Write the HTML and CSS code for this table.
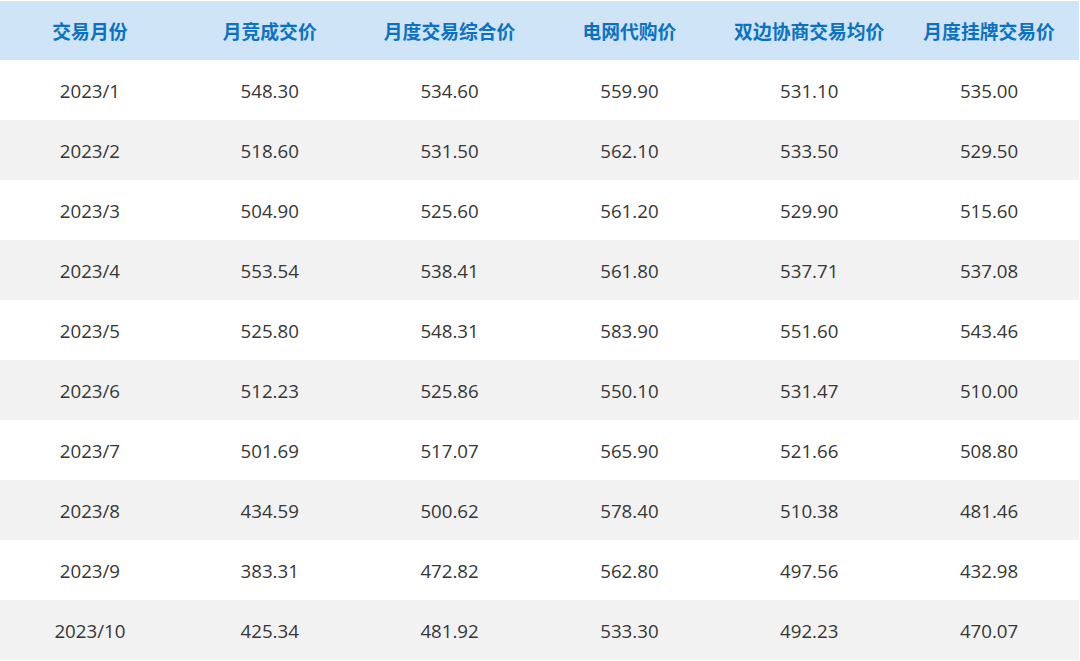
FILE: index.html
```html
<!DOCTYPE html>
<html lang="zh-CN">
<head>
<meta charset="utf-8">
<link rel="stylesheet" href="styles.css">
</head>
<body>
<div class="table">
  <div class="row head">
    <div class="cell">交易月份</div><div class="cell">月竞成交价</div><div class="cell">月度交易综合价</div><div class="cell">电网代购价</div><div class="cell">双边协商交易均价</div><div class="cell">月度挂牌交易价</div>
  </div>
  <div class="row"><div class="cell">2023/1</div><div class="cell">548.30</div><div class="cell">534.60</div><div class="cell">559.90</div><div class="cell">531.10</div><div class="cell">535.00</div></div>
  <div class="row alt"><div class="cell">2023/2</div><div class="cell">518.60</div><div class="cell">531.50</div><div class="cell">562.10</div><div class="cell">533.50</div><div class="cell">529.50</div></div>
  <div class="row"><div class="cell">2023/3</div><div class="cell">504.90</div><div class="cell">525.60</div><div class="cell">561.20</div><div class="cell">529.90</div><div class="cell">515.60</div></div>
  <div class="row alt"><div class="cell">2023/4</div><div class="cell">553.54</div><div class="cell">538.41</div><div class="cell">561.80</div><div class="cell">537.71</div><div class="cell">537.08</div></div>
  <div class="row"><div class="cell">2023/5</div><div class="cell">525.80</div><div class="cell">548.31</div><div class="cell">583.90</div><div class="cell">551.60</div><div class="cell">543.46</div></div>
  <div class="row alt"><div class="cell">2023/6</div><div class="cell">512.23</div><div class="cell">525.86</div><div class="cell">550.10</div><div class="cell">531.47</div><div class="cell">510.00</div></div>
  <div class="row"><div class="cell">2023/7</div><div class="cell">501.69</div><div class="cell">517.07</div><div class="cell">565.90</div><div class="cell">521.66</div><div class="cell">508.80</div></div>
  <div class="row alt"><div class="cell">2023/8</div><div class="cell">434.59</div><div class="cell">500.62</div><div class="cell">578.40</div><div class="cell">510.38</div><div class="cell">481.46</div></div>
  <div class="row"><div class="cell">2023/9</div><div class="cell">383.31</div><div class="cell">472.82</div><div class="cell">562.80</div><div class="cell">497.56</div><div class="cell">432.98</div></div>
  <div class="row alt"><div class="cell">2023/10</div><div class="cell">425.34</div><div class="cell">481.92</div><div class="cell">533.30</div><div class="cell">492.23</div><div class="cell">470.07</div></div>
</div>
</body>
</html>
```
FILE: styles.css
```css
html, body {
  margin: 0;
  padding: 0;
  background: #ffffff;
}
body {
  padding-top: 1px;
  font-family: "Open Sans", "Noto Sans CJK SC", sans-serif;
}
.table {
  width: 1079px;
  display: flex;
  flex-direction: column;
}
.row {
  display: grid;
  grid-template-columns: repeat(6, 1fr);
  height: 60px;
  align-items: center;
}
.row.head {
  height: 59px;
  background: #cfe4f7;
}
.row.alt {
  background: #f2f2f2;
}
.cell {
  text-align: center;
  font-size: 18.7px;
  color: #363636;
}
.head .cell {
  font-family: "Noto Sans CJK SC", sans-serif;
  font-weight: 700;
  font-size: 18.8px;
  color: #0b72c1;
}
```
